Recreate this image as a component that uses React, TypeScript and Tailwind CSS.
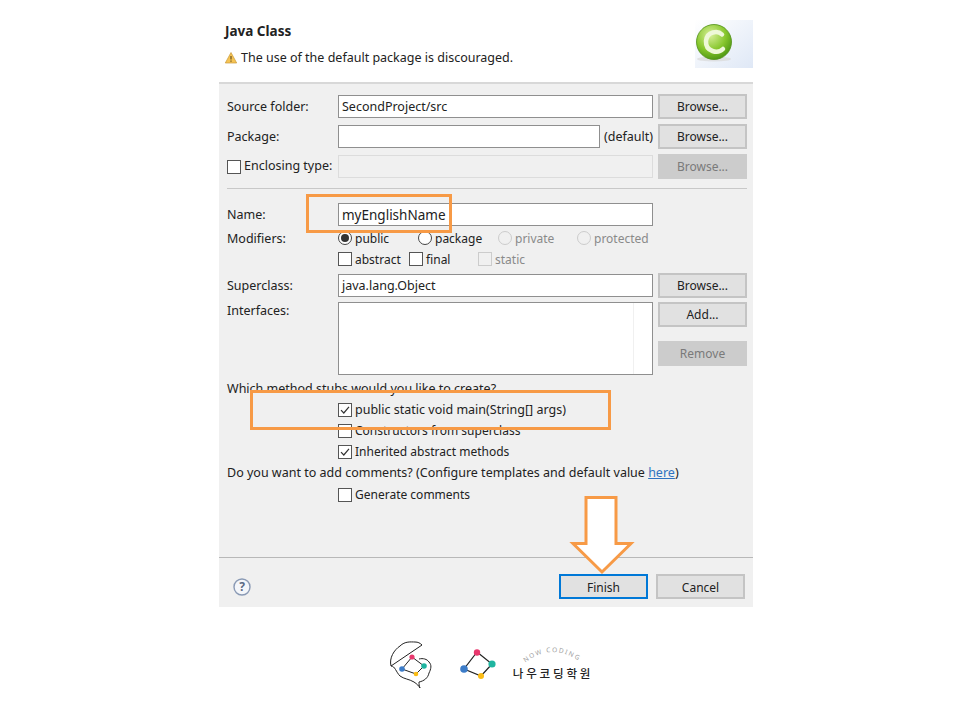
import React from 'react';

const fontStack = { fontFamily: '"Noto Sans", "Noto Sans CJK KR", sans-serif' };

function Btn({ label, disabled, focus, low }: { label: string; disabled?: boolean; focus?: boolean; low?: boolean }) {
  return (
    <button
      className={`h-[25px] w-[89px] shrink-0 border-2 text-[12px] leading-none ${low ? 'pt-[2px]' : ''} ${
        disabled
          ? 'bg-[#cccccc] border-[#cccccc] text-[#7a7a7a]'
          : focus
            ? 'bg-[#e1e1e1] border-[#0078d7] text-[#222222]'
            : 'bg-[#e1e1e1] border-[#c4c4c4] text-[#222222]'
      }`}
    >
      {label}
    </button>
  );
}

function Input({ value, width, disabled, big }: { value?: string; width: string; disabled?: boolean; big?: boolean }) {
  return (
    <div
      className={`h-[23px] ${width} shrink-0 border flex items-center px-[3px] pt-[2px] text-[#222222] ${big ? 'text-[13.5px]' : ''} ${
        disabled ? 'bg-[#f0f0f0] border-[#dcdcdc]' : 'bg-white border-[#8f8f8f]'
      }`}
    >
      {value}
    </div>
  );
}

function Check({ checked, disabled }: { checked?: boolean; disabled?: boolean }) {
  return (
    <span
      className={`w-[14px] h-[14px] shrink-0 border flex items-center justify-center ${
        disabled ? 'border-[#cccccc] bg-[#f0f0f0]' : 'border-[#555555] bg-white'
      }`}
    >
      {checked && (
        <svg width="10" height="10" viewBox="0 0 10 10" fill="none">
          <path d="M1 5.2 L3.8 8 L9 1.8" stroke="#333333" strokeWidth="1.2" />
        </svg>
      )}
    </span>
  );
}

function Radio({ checked, disabled }: { checked?: boolean; disabled?: boolean }) {
  return (
    <span
      className={`w-[14px] h-[14px] shrink-0 rounded-full border flex items-center justify-center ${
        disabled ? 'border-[#cccccc] bg-[#f0f0f0]' : 'border-[#444444] bg-white'
      }`}
    >
      {checked && <span className="w-2 h-2 rounded-full bg-[#333333]" />}
    </span>
  );
}

function Option({ label, children, width, disabled }: { label: string; children: React.ReactNode; width: string; disabled?: boolean }) {
  return (
    <span className={`flex items-center gap-[3px] text-[12px] ${width} ${disabled ? 'text-[#8a8a8a]' : ''}`}>
      {children}
      <span className="pt-[2px]">{label}</span>
    </span>
  );
}

function CheckRow({ label, checked, className }: { label: string; checked?: boolean; className: string }) {
  return (
    <div className={`h-5 pl-[111px] flex items-center gap-[3px] ${className}`}>
      <Check checked={checked} />
      <span>{label}</span>
    </div>
  );
}

function ClassIcon() {
  return (
    <svg width="38" height="42" viewBox="0 0 38 42" className="absolute left-[476px] top-[3px]">
      <defs>
        <radialGradient id="ball" cx="0.4" cy="0.3" r="0.8">
          <stop offset="0" stopColor="#d8f09a" />
          <stop offset="0.55" stopColor="#86c62c" />
          <stop offset="1" stopColor="#3f8a0c" />
        </radialGradient>
      </defs>
      <ellipse cx="19" cy="36" rx="17" ry="2.5" fill="#d8d8d8" opacity="0.7" />
      <circle cx="19" cy="19" r="17.5" fill="url(#ball)" stroke="#4f8f16" strokeWidth="0.8" />
      <path d="M27 11.5 C23 7.5 12 8 11 18 C10.5 29 23 31 28 26" fill="none" stroke="#eef8d8" strokeWidth="4.5" strokeLinecap="round" />
    </svg>
  );
}

function Logo() {
  return (
    <div className="flex items-start h-[60px] pl-[389px]">
      <svg width="44" height="50" viewBox="0 0 44 50" fill="none">
        <path
          d="M2 26 C0 18 5 10 11 6 C16 1 22 2 26 2 C29 2 31 3 33 5 L2 26 C6 26 7 32 11 36 C15 39 20 39 25 42 C28 44 30 46 31 48 C30 46 30 44 30 42 C35 41 39 38 40 33 C42 29 43 25 40 22 C38 19 34 18 30 19"
          stroke="#222222"
          strokeWidth="1"
        />
        <path d="M23 17 L35 26 L27 34 L13 29 Z" stroke="#222222" strokeWidth="1" />
        <circle cx="23" cy="17" r="2.6" fill="#e8386d" />
        <circle cx="35" cy="26" r="2.8" fill="#1fb5a0" />
        <circle cx="27" cy="34" r="2.3" fill="#fbbc14" />
        <circle cx="13" cy="29" r="2.8" fill="#3c7cc8" />
      </svg>
      <svg width="38" height="32" viewBox="0 0 38 32" className="mt-[8px] ml-[26px]" fill="none">
        <path d="M18 4 L33 16 L22 28 L5 21 Z" stroke="#222222" strokeWidth="1.2" />
        <circle cx="18" cy="4.5" r="3.2" fill="#e8386d" />
        <circle cx="33" cy="16" r="3.6" fill="#1fb5a0" />
        <circle cx="22" cy="28" r="3" fill="#fbbc14" />
        <circle cx="5" cy="21" r="3.8" fill="#3c7cc8" />
      </svg>
      <div className="w-[82px] ml-[15px] flex flex-col items-center">
        <svg width="66" height="20" viewBox="0 0 66 20" className="mt-[6px]">
          <path id="arc" d="M2 19 Q33 -7 64 19" fill="none" />
          <text fontSize="6.5" letterSpacing="1.5" fill="#a0a0a0" fontFamily="Noto Sans, sans-serif">
            <textPath href="#arc" startOffset="4">NOW CODING</textPath>
          </text>
        </svg>
        <span className="text-[11.5px] font-medium leading-none tracking-[2.8px] whitespace-nowrap text-[#222222] mt-[2px]">나우코딩학원</span>
      </div>
    </div>
  );
}

export default function App() {
  return (
    <div className="relative w-[960px] h-[720px] bg-white overflow-hidden text-[12.5px] text-[#222222]" style={fontStack}>
      <div className="ml-[219px] w-[534px] pt-5">
        {/* Header */}
        <div className="relative h-[62px] pl-[6px] pt-[2px]">
          <div className="absolute right-0 top-0 w-[58px] h-[48px] bg-gradient-to-br from-white to-[#dfe8f6]" />
          <ClassIcon />
          <h1 className="text-[13.5px] font-bold leading-[18px]">Java Class</h1>
          <div className="flex items-center gap-1 mt-[9px] leading-[18px]">
            <svg width="12" height="12" viewBox="0 0 12 12">
              <path d="M6 0.5 L11.7 11 L0.3 11 Z" fill="#f6c453" stroke="#c89a3a" strokeWidth="0.7" strokeLinejoin="round" />
              <path d="M6 4 V7.6 M6 8.6 V9.8" stroke="#5a4520" strokeWidth="1.1" />
            </svg>
            <span>The use of the default package is discouraged.</span>
          </div>
        </div>

        {/* Body */}
        <div className="bg-[#f0f0f0] border-t-2 border-[#d8d8d8]">
          <div className="pl-2 pr-[6px] pt-[10px]">
            <div className="flex items-center">
              <span className="w-[111px] pt-[2px]">Source folder:</span>
              <Input value="SecondProject/src" width="w-[315px]" />
              <span className="ml-[5px]"><Btn label="Browse..." /></span>
            </div>
            <div className="flex items-center mt-[5px]">
              <span className="w-[111px] pt-[2px]">Package:</span>
              <Input width="w-[262px]" />
              <span className="w-[53px] text-right pt-[2px]">(default)</span>
              <span className="ml-[5px]"><Btn label="Browse..." /></span>
            </div>
            <div className="flex items-center mt-[5px]">
              <span className="w-[111px] flex items-center gap-[3px] whitespace-nowrap">
                <Check />
                Enclosing type:
              </span>
              <Input width="w-[315px]" disabled />
              <span className="ml-[5px]"><Btn label="Browse..." disabled /></span>
            </div>
            <div className="h-px bg-[#c8c8c8] mt-[9px]" />
            <div className="flex items-center mt-[14px]">
              <span className="w-[111px] pt-[2px]">Name:</span>
              <Input value="myEnglishName" width="w-[315px]" big />
            </div>
            <div className="flex items-center h-5 mt-[2px]">
              <span className="w-[111px] pt-[2px]">Modifiers:</span>
              <Option label="public" width="w-[80px]"><Radio checked /></Option>
              <Option label="package" width="w-[80px]"><Radio /></Option>
              <Option label="private" width="w-[79px]" disabled><Radio disabled /></Option>
              <Option label="protected" width="w-[75px]" disabled><Radio disabled /></Option>
            </div>
            <div className="flex items-center h-5 mt-px">
              <span className="w-[111px]" />
              <Option label="abstract" width="w-[71px]"><Check /></Option>
              <Option label="final" width="w-[69px]"><Check /></Option>
              <Option label="static" width="w-[60px]" disabled><Check disabled /></Option>
            </div>
            <div className="flex items-center mt-[4px]">
              <span className="w-[111px] pt-[2px]">Superclass:</span>
              <Input value="java.lang.Object" width="w-[315px]" />
              <span className="ml-[5px]"><Btn label="Browse..." /></span>
            </div>
            <div className="flex items-start mt-[4px]">
              <span className="w-[111px] leading-[18px]">Interfaces:</span>
              <div className="w-[315px] h-[73px] shrink-0 bg-white border border-[#8f8f8f] flex justify-end">
                <div className="w-[19px] border-l border-[#f0f0f0]" />
              </div>
              <div className="ml-[5px] flex flex-col gap-[14px]">
                <Btn label="Add..." />
                <Btn label="Remove" disabled />
              </div>
            </div>
            <div className="h-5 mt-[4px] leading-5">Which method stubs would you like to create?</div>
            <CheckRow label="public static void main(String[] args)" checked className="mt-px" />
            <CheckRow label="Constructors from superclass" className="mt-px text-[12px]" />
            <CheckRow label="Inherited abstract methods" checked className="mt-px text-[12px]" />
            <div className="h-5 mt-px leading-5 whitespace-nowrap">
              Do you want to add comments? (Configure templates and default value <span className="text-[#2f73c0] underline">here</span>)
            </div>
            <CheckRow label="Generate comments" className="mt-[2px] text-[12px]" />
          </div>

          {/* Footer */}
          <div className="mt-[52px] h-[50px] border-t border-[#b8b8b8] flex items-center justify-between pl-[14px] pr-2 pt-[8px]">
            <svg width="18" height="18" viewBox="0 0 18 18">
              <circle cx="9" cy="9" r="8" fill="#f4f6fa" stroke="#8a9ab5" strokeWidth="1.4" />
              <text x="9" y="13.2" textAnchor="middle" fontSize="12" fontWeight="700" fill="#5a6a85" fontFamily="Noto Sans, sans-serif">?</text>
            </svg>
            <div className="flex gap-2">
              <Btn label="Finish" focus low />
              <Btn label="Cancel" low />
            </div>
          </div>
        </div>
      </div>

      <div className="mt-[33px]"><Logo /></div>

      {/* Orange annotations over the dialog */}
      <div className="absolute left-[306px] top-[194px] w-[146px] h-[39px] border-[3px] border-[#f79a46]" />
      <div className="absolute left-[250px] top-[390px] w-[361px] h-[40px] border-[3px] border-[#f79a46]" />
      <svg width="68" height="82" viewBox="0 0 68 82" className="absolute left-[568px] top-[494px]">
        <path d="M18 3.5 H48 V49.5 H63 L34 78 L5 49.5 H18 Z" fill="white" stroke="#f79a46" strokeWidth="3" />
      </svg>
    </div>
  );
}
